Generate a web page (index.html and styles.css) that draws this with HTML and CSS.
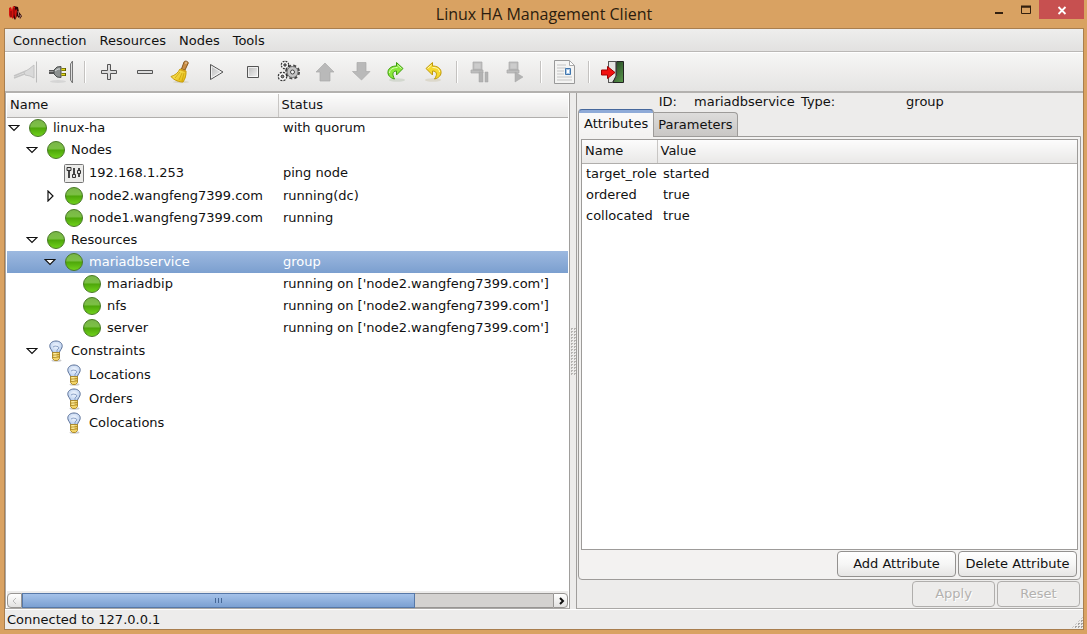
FILE: index.html
```
<!DOCTYPE html>
<html lang="en">
  <head>
    <meta charset="utf-8" />
    <title>Linux HA Management Client</title>
    <link rel="stylesheet" href="styles.css">
  </head>

  <body>
    <!-- shared icons -->
    <svg class="defs" width="0" height="0" aria-hidden="true">
      <defs>
        <linearGradient id="metal" x1="0" y1="0" x2="1" y2="1">
          <stop offset="0" stop-color="#b8b8b8" />
          <stop offset="1" stop-color="#f6f6f6" />
        </linearGradient>
        <linearGradient id="straw" x1="0" y1="0" x2="1" y2="1">
          <stop offset="0" stop-color="#fff27a" />
          <stop offset="1" stop-color="#e3b500" />
        </linearGradient>
        <linearGradient id="forest" x1="0" y1="0" x2="1" y2="1">
          <stop offset="0" stop-color="#16301a" />
          <stop offset="1" stop-color="#5c9a4d" />
        </linearGradient>
        <radialGradient id="glass" cx="0.5" cy="0.4" r="0.6">
          <stop offset="0" stop-color="#f4f8ff" />
          <stop offset="1" stop-color="#b4cbec" />
        </radialGradient>
      </defs>
      <symbol id="open" viewBox="0 0 12 12">
        <path d="M1 3.500h10L6 8.500z" fill="#fff" stroke="#111" stroke-width="1.200" />
      </symbol>
      <symbol id="closed" viewBox="0 0 12 12">
        <path d="M4 1v10l5-5z" fill="#fff" stroke="#111" stroke-width="1.200" />
      </symbol>
      <symbol id="bulb" viewBox="0 0 18 22">
        <ellipse cx="9.500" cy="20.500" rx="5" ry="1.200" fill="#ccc" />
        <path d="M9 1C5 1 2.500 3.500 2.800 6.500c.2 2.500 2.400 3.500 2.900 6.500h6.600c.5-3 2.700-4 2.900-6.500C15.500 3.500 13 1 9 1z" fill="url(#glass)" stroke="#5a7098" />
        <path d="M6 7l2-1 3 .5 1 1.500-2 2v2.500" fill="none" stroke="#7f97bf" stroke-width=".9" />
        <path d="M5.500 12.500h7v6l-2 2h-3l-2-2z" fill="#f3d568" stroke="#a98423" stroke-width=".9" />
        <path d="M5.500 15.200l7-.6M5.500 17.400l7-.6" stroke="#a98423" />
        <path d="M6.500 13.800h3M6.500 16.200h3" stroke="#fff5b8" />
      </symbol>
    </svg>

    <header class="titlebar">
      <svg class="logo" viewBox="0 0 14 16" width="14" height="16">
        <path d="M6 1l4 1 1 5 3 4-2 3-3-3-2 4-2-3z" fill="#2b0605" />
        <path d="M1 3l2-1 1 3 1-4 2 1v4l1-2 1 1-1 9-1-2-1-3-1 5-2-2-1 1-1-3z" fill="#d5120e" />
        <path d="M3 6v6M6 3v8" stroke="#7a0705" />
        <path d="M10 6l1 5M13 10l-2 4" stroke="#e9b9a8" stroke-width=".7" />
      </svg>
      <h1>Linux HA Management Client</h1>
      <div class="window-buttons">
        <button aria-label="Minimize"><svg viewBox="0 0 12 18" width="12" height="18"><path d="M2 12h8" stroke="#33200f" stroke-width="2" /></svg></button>
        <button aria-label="Maximize"><svg viewBox="0 0 12 18" width="12" height="18"><path d="M1.500 6h9v6.500h-9z" fill="none" stroke="#33200f" /><path d="M1 5.500h10" stroke="#33200f" stroke-width="2" /></svg></button>
        <button class="close" aria-label="Close"><svg viewBox="0 0 12 18" width="12" height="18"><path d="M2.500 6l7 7M9.500 6l-7 7" stroke="#fff" stroke-width="1.800" /></svg></button>
      </div>
    </header>

    <div class="window">
      <nav class="menubar">
        <button>Connection</button>
        <button>Resources</button>
        <button>Nodes</button>
        <button>Tools</button>
      </nav>

      <div class="toolbar">
        <button aria-label="Login" disabled>
          <svg viewBox="0 0 24 24">
            <path d="M1 16l12-5M1 18l13-5" stroke="#c3c3c3" stroke-width="1.500" fill="none" />
            <path d="M11 12l5-3 5-4v13l-4-2-5-1z" fill="#dadada" stroke="#c3c3c3" />
            <path d="M23.500 1.500v21" stroke="#bbb" />
          </svg>
        </button>
        <button aria-label="Logout">
          <svg viewBox="0 0 24 24">
            <ellipse cx="9" cy="21.500" rx="8" ry="1.500" fill="#d5d5d5" />
            <path d="M0 12h6" stroke="#555" stroke-width="4" />
            <path d="M0 11.500h6" stroke="#999" />
            <path d="M5 10l3-3 4-.5v11L8 17l-3-3z" fill="#8d9190" stroke="#4b4f4e" />
            <path d="M6 11l3-2h2" stroke="#d9dddc" fill="none" />
            <path d="M12.500 9.500H17M12.500 14.500H17" stroke="#5f5c00" stroke-width="3" />
            <path d="M12.500 9.500H16M12.500 14.500H16" stroke="#e6dc1c" stroke-width="1.400" />
            <path d="M23.500 1l-2 3v16l2 3z" fill="#ddd" stroke="#777" />
          </svg>
        </button>
        <span class="separator"></span>
        <button aria-label="Add">
          <svg viewBox="0 0 24 24"><path d="M10.500 4.500h3v6h6v3h-6v6h-3v-6h-6v-3h6z" fill="#ddd" stroke="#555" /></svg>
        </button>
        <button aria-label="Remove">
          <svg viewBox="0 0 24 24"><path d="M4.500 10.500h15v3h-15z" fill="#ddd" stroke="#555" /></svg>
        </button>
        <button aria-label="Clean up">
          <svg viewBox="0 0 24 24">
            <ellipse cx="12" cy="22" rx="8" ry="1.200" fill="#d8d5c9" />
            <path d="M12.500 9l2.500-7c.6-1.600 4.600-.8 4.200 1.200L16 10z" fill="#c98d45" stroke="#85571f" />
            <path d="M17 2.200v1.600" stroke="#fbe9cd" />
            <path d="M11 9l6 2c.3 4-.8 8-3 11-3 .2-9-1.500-12-5.500 4-1.200 7-3.500 9-7.500z" fill="url(#straw)" stroke="#c69b08" />
            <path d="M11 12l-5 6M13 13l-3 7M15 13l-2 8" stroke="#c69b08" stroke-width=".7" />
            <path d="M11 9.500l6 2" stroke="#d4a21a" stroke-width="1.500" />
          </svg>
        </button>
        <button aria-label="Start">
          <svg viewBox="0 0 24 24"><path d="M5.500 4.500v15l12.500-7.500z" fill="url(#metal)" stroke="#555" /><path d="M6.500 6.300v11.400l9.500-5.700z" fill="none" stroke="#fff" stroke-width=".7" /></svg>
        </button>
        <button aria-label="Stop">
          <svg viewBox="0 0 24 24"><path d="M6.500 6.500h11v11h-11z" fill="url(#metal)" stroke="#555" /><path d="M7.500 7.500h9v9h-9z" fill="none" stroke="#fff" stroke-width=".7" /></svg>
        </button>
        <button aria-label="Default">
          <svg viewBox="0 0 24 24">
            <circle cx="15.500" cy="12" r="6" fill="#bbb" stroke="#444" stroke-width="3" stroke-dasharray="2.700 2.010" />
            <circle cx="15.500" cy="12" r="5.500" fill="#c4c4c4" stroke="#777" />
            <circle cx="15.500" cy="12" r="2" fill="#f4f4f4" stroke="#444" />
            <circle cx="8" cy="5" r="3.300" fill="#fafafa" stroke="#333" stroke-width="2" stroke-dasharray="1.700 .9" />
            <circle cx="8" cy="5" r="3" fill="#fafafa" />
            <circle cx="8" cy="5" r="1.200" fill="#888" stroke="#333" />
            <circle cx="5.500" cy="16.500" r="3.800" fill="#fafafa" stroke="#333" stroke-width="2" stroke-dasharray="1.900 1.080" />
            <circle cx="5.500" cy="16.500" r="3.500" fill="#fafafa" />
            <circle cx="5.500" cy="16.500" r="1.400" fill="#888" stroke="#333" />
          </svg>
        </button>
        <button aria-label="Move up" disabled>
          <svg viewBox="0 0 24 24"><path d="M12 3l9 9h-4v9H7v-9H3z" fill="#b9b9b9" stroke="#aaa" stroke-width=".7" /></svg>
        </button>
        <button aria-label="Move down" disabled>
          <svg viewBox="0 0 24 24"><path d="M8 2.500h9v9h4L12.500 20 3.500 11.500H8z" fill="#b9b9b9" stroke="#aaa" stroke-width=".7" /></svg>
        </button>
        <button aria-label="Migrate">
          <svg viewBox="0 0 24 24">
            <ellipse cx="12" cy="20" rx="8" ry="1.700" fill="#d3d8cf" />
            <path d="M11.500 2.500l6.500 6-6.500 6.500v-4c-4 0-4.500 3.500-2 8C5 18 2.500 15 3 11.500c.5-3.500 4-5.500 8.500-5.500z" fill="#8ae83a" stroke="#3f9d10" />
            <path d="M12.500 5l4 3.500M4.500 13c0-3.500 3.500-5.500 8-5.500" stroke="#d7ffb8" fill="none" />
          </svg>
        </button>
        <button aria-label="Unmigrate">
          <svg viewBox="0 0 24 24">
            <ellipse cx="12" cy="20" rx="8" ry="1.700" fill="#dcd8cb" />
            <path d="M11.500 2.500L5 8.500l6.500 6.500v-4c4 0 5.500 3 2 8 4.500-1 7-4 6.500-7.500C19.500 8 16 6 11.500 6z" fill="#f6d92f" stroke="#c09a0b" />
            <path d="M10.500 5L6.500 8.500M18.500 12c0-3-3-4.500-7-4.500" stroke="#fff9bd" fill="none" />
          </svg>
        </button>
        <span class="separator"></span>
        <button aria-label="Standby" disabled>
          <svg viewBox="0 0 24 24">
            <path d="M4 2h9v8H4zM2 10h12v3H2z" fill="#bdbdbd" stroke="#aaa" stroke-width=".7" />
            <path d="M5.500 3.500h6v5h-6z" fill="#ccc" />
            <path d="M10 12h4v10h-4zM16 12h3v10h-3z" fill="#b3b3b3" stroke="#a5a5a5" stroke-width=".5" />
          </svg>
        </button>
        <button aria-label="Active" disabled>
          <svg viewBox="0 0 24 24">
            <path d="M4 2h9v8H4zM2 10h12v3H2z" fill="#bdbdbd" stroke="#aaa" stroke-width=".7" />
            <path d="M5.500 3.500h6v5h-6z" fill="#ccc" />
            <path d="M10 12l8 5-8 5z" fill="#b3b3b3" stroke="#a5a5a5" stroke-width=".5" />
          </svg>
        </button>
        <span class="separator"></span>
        <button aria-label="View transition">
          <svg viewBox="0 0 24 24">
            <path d="M1.500.5h15l5 5v18h-20z" fill="#f4f4f3" stroke="#999" />
            <path d="M16.500.5v5h5z" fill="#fff" stroke="#aaa" />
            <path d="M4 5h9M4 8h9M4 11h7M4 14h7M4 17h15M4 20h15" stroke="#c4c4c4" />
            <path d="M12.500 8.500h5v6h-5z" fill="#a9c8e8" stroke="#4176ad" />
            <path d="M14 10h2v3h-2z" fill="#fff" />
          </svg>
        </button>
        <span class="separator"></span>
        <button aria-label="Quit">
          <svg viewBox="0 0 24 24">
            <path d="M7.500 1.500h15v21h-15z" fill="url(#forest)" stroke="#222" />
            <path d="M7.500 1.500h8v15l-4 6h-4z" fill="#e6e6e4" stroke="#555" />
            <path d="M15 2v14l-3 6" stroke="#222" fill="none" />
            <path d="M.5 10h6V6.500l7.500 6-7.500 6V15h-6z" fill="#f21111" stroke="#a30000" />
          </svg>
        </button>
      </div>

      <main class="panes">
        <section class="left">
          <table class="tree">
            <thead>
              <tr><th>Name</th><th>Status</th></tr>
            </thead>
            <tbody>
              <tr>
                <td><div class="node"><svg class="arrow"><use href="#open" /></svg><i class="ball"></i>linux-ha</div></td>
                <td>with quorum</td>
              </tr>
              <tr>
                <td><div class="node level1"><svg class="arrow"><use href="#open" /></svg><i class="ball"></i>Nodes</div></td>
                <td></td>
              </tr>
              <tr class="tall">
                <td>
                  <div class="node level2"><span class="arrow"></span>
                    <svg class="ping" viewBox="0 0 20 19">
                      <rect x=".5" y=".5" width="19" height="18" rx="1" fill="#ececea" stroke="#777" />
                      <path d="M5 5v9M10 4v9M15 4v9" stroke="#444" stroke-width="2" />
                      <path d="M3 3.500h4v3H3zM8.500 10.500h3v3h-3zM13.500 6.500h3v3h-3z" fill="#ddd" stroke="#333" />
                    </svg>192.168.1.253</div>
                </td>
                <td>ping node</td>
              </tr>
              <tr>
                <td><div class="node level2"><svg class="arrow"><use href="#closed" /></svg><i class="ball"></i>node2.wangfeng7399.com</div></td>
                <td>running(dc)</td>
              </tr>
              <tr>
                <td><div class="node level2"><span class="arrow"></span><i class="ball"></i>node1.wangfeng7399.com</div></td>
                <td>running</td>
              </tr>
              <tr>
                <td><div class="node level1"><svg class="arrow"><use href="#open" /></svg><i class="ball"></i>Resources</div></td>
                <td></td>
              </tr>
              <tr class="selected">
                <td><div class="node level2"><svg class="arrow"><use href="#open" /></svg><i class="ball"></i>mariadbservice</div></td>
                <td>group</td>
              </tr>
              <tr>
                <td><div class="node level3"><span class="arrow"></span><i class="ball"></i>mariadbip</div></td>
                <td>running on ['node2.wangfeng7399.com']</td>
              </tr>
              <tr>
                <td><div class="node level3"><span class="arrow"></span><i class="ball"></i>nfs</div></td>
                <td>running on ['node2.wangfeng7399.com']</td>
              </tr>
              <tr>
                <td><div class="node level3"><span class="arrow"></span><i class="ball"></i>server</div></td>
                <td>running on ['node2.wangfeng7399.com']</td>
              </tr>
              <tr class="tall">
                <td><div class="node level1"><svg class="arrow"><use href="#open" /></svg><svg class="bulb"><use href="#bulb" /></svg>Constraints</div></td>
                <td></td>
              </tr>
              <tr class="tall">
                <td><div class="node level2"><span class="arrow"></span><svg class="bulb"><use href="#bulb" /></svg>Locations</div></td>
                <td></td>
              </tr>
              <tr class="tall">
                <td><div class="node level2"><span class="arrow"></span><svg class="bulb"><use href="#bulb" /></svg>Orders</div></td>
                <td></td>
              </tr>
              <tr class="tall">
                <td><div class="node level2"><span class="arrow"></span><svg class="bulb"><use href="#bulb" /></svg>Colocations</div></td>
                <td></td>
              </tr>
            </tbody>
          </table>
          <div class="scrollbar">
            <button class="scroll-left" aria-label="Scroll left" disabled><svg viewBox="0 0 8 8"><path d="M5 1L2 4l3 3" /></svg></button>
            <div class="track"><div class="thumb"><i></i><i></i><i></i></div></div>
            <button class="scroll-right" aria-label="Scroll right"><svg viewBox="0 0 8 8"><path d="M3 1l3 3-3 3" /></svg></button>
          </div>
        </section>

        <div class="splitter"><span class="grip"></span></div>

        <section class="right">
          <div class="info">
            <span>ID:</span>
            <span>mariadbservice</span>
            <span>Type:</span>
            <span>group</span>
          </div>
          <div class="tabs">
            <button class="tab active">Attributes</button>
            <button class="tab">Parameters</button>
          </div>
          <div class="page">
            <div class="list">
              <table class="attributes">
                <thead>
                  <tr><th>Name</th><th>Value</th></tr>
                </thead>
                <tbody>
                  <tr><td>target_role</td><td>started</td></tr>
                  <tr><td>ordered</td><td>true</td></tr>
                  <tr><td>collocated</td><td>true</td></tr>
                </tbody>
              </table>
            </div>
            <div class="buttons">
              <button class="wide">Add Attribute</button>
              <button class="wide">Delete Attribute</button>
            </div>
          </div>
          <div class="buttons bottom">
            <button disabled>Apply</button>
            <button disabled>Reset</button>
          </div>
        </section>
      </main>

      <footer class="statusbar">
        <span>Connected to 127.0.0.1</span>
        <span class="resize"></span>
      </footer>
    </div>
  </body>
</html>
```
FILE: styles.css
```
* {
  box-sizing: border-box;
}
body {
  margin: 0;
  height: 100vh;
  display: flex;
  flex-direction: column;
  padding: 0 3px 4px 4px;
  background: #d9a262;
  font-family: "DejaVu Sans", Verdana, sans-serif;
  font-size: 13px;
  line-height: 16px;
  color: #111;
}
button {
  font: inherit;
  color: inherit;
  border: none;
  background: none;
  padding: 0;
}
table {
  border-collapse: collapse;
  table-layout: fixed;
  width: 100%;
}
th {
  font-weight: normal;
  text-align: left;
}
.defs {
  position: absolute;
}

/* window frame */
.titlebar {
  display: grid;
  grid-template-columns: 1fr auto 1fr;
  height: 28px;
}
.logo {
  margin: 5px 4px;
}
.titlebar h1 {
  margin: 0;
  font-family: "Open Sans", sans-serif;
  font-size: 16px;
  font-weight: normal;
  line-height: 28px;
  color: #2b1c0e;
}
.window-buttons {
  display: flex;
  justify-content: flex-end;
}
.window-buttons button {
  width: 27px;
  height: 19px;
}
.window-buttons svg {
  display: block;
  margin: 0 auto;
}
.window-buttons .close {
  width: 45px;
  background: #c75050;
}
.window {
  flex: 1;
  min-height: 0;
  display: flex;
  flex-direction: column;
  border: 1px solid #a97e4e;
  background: #edeceb;
}

/* menu and toolbar */
.menubar {
  display: flex;
  gap: 13px;
  height: 23px;
  padding: 1px 8px 0;
  background: linear-gradient(#eeeeed, #e2e1e0);
  border-bottom: 1px solid #bab8b6;
}
.toolbar {
  display: flex;
  align-items: center;
  height: 41px;
  padding-left: 2px;
  background: linear-gradient(#f6f6f5, #e5e4e3);
  border-top: 1px solid #fff;
  border-bottom: 2px solid #b3b1af;
}
.toolbar button {
  width: 36px;
  height: 36px;
}
.toolbar svg {
  display: block;
  width: 24px;
  height: 24px;
  margin: 0 auto;
  overflow: visible;
}
.separator {
  width: 2px;
  height: 22px;
  margin: 0 5px;
  background: #c4c2c0;
  border-right: 1px solid #fff;
}

/* panes */
.panes {
  flex: 1;
  min-height: 0;
  display: grid;
  grid-template-columns: minmax(0, 564fr) 8px minmax(0, 506fr);
}
.left {
  display: flex;
  flex-direction: column;
  padding: 1px 1px 0;
  background: #fff;
  border-left: 1px solid #aaa8a6;
  border-bottom: 1px solid #aaa8a6;
}
.tree th,
.attributes th {
  height: 23px;
  padding: 0 3px;
  background: linear-gradient(#fcfcfc, #e9e8e7);
  border-bottom: 1px solid #b0aeac;
}
.tree th:first-child {
  width: 271px;
}
.tree th + th,
.attributes th + th {
  border-left: 1px solid #c8c6c4;
}
.tree td {
  height: 22px;
  padding: 0 5px;
  white-space: nowrap;
}
.tree td:first-child {
  padding: 0 0 0 1px;
}
.tree .tall td {
  height: 24px;
}
.tree .selected {
  background: linear-gradient(#9db9e0, #7b9fcf);
  color: #fff;
}
.node {
  display: flex;
  align-items: center;
}
.level1 {
  padding-left: 18px;
}
.level2 {
  padding-left: 36px;
}
.level3 {
  padding-left: 54px;
}
.arrow {
  flex: none;
  width: 12px;
  height: 12px;
  margin-right: 9px;
}
.ball {
  flex: none;
  width: 18px;
  height: 18px;
  margin-right: 6px;
  border: 1px solid #4a7a28;
  border-radius: 50%;
  background: linear-gradient(#79b548, #7cc046 40%, #4fa80a 52%, #6fd01c);
}
.bulb {
  flex: none;
  width: 18px;
  height: 22px;
  margin-right: 6px;
}
.ping {
  flex: none;
  width: 20px;
  height: 19px;
  margin-right: 5px;
  margin-left: -1px;
}
.scrollbar {
  display: flex;
  height: 17px;
  margin-top: auto;
  padding-top: 2px;
  background: #edeceb;
}
.scrollbar button {
  width: 15px;
  background: linear-gradient(#fff, #e3e2e1);
  border: 1px solid #979593;
}
.scrollbar svg {
  display: block;
  width: 8px;
  height: 8px;
  margin: 0 auto;
  fill: none;
  stroke: #111;
  stroke-width: 2px;
}
.scrollbar button:disabled svg {
  stroke: #bbb;
  stroke-width: 1px;
}
.scroll-left {
  border-radius: 4px 0 0 4px;
}
.scroll-right {
  border-radius: 0 4px 4px 0;
}
.track {
  flex: 1;
  background: #d4d2d0;
  border: 1px solid #979593;
  border-width: 1px 0;
}
.thumb {
  display: flex;
  justify-content: center;
  align-items: center;
  gap: 2px;
  width: 74%;
  height: 15px;
  margin-top: -1px;
  background: linear-gradient(#a5c2e9, #7ba0d2);
  border: 1px solid #5678a8;
}
.thumb i {
  width: 1px;
  height: 5px;
  background: #456796;
}
.splitter {
  display: flex;
  align-items: center;
  justify-content: center;
  background: #edeceb;
  border-left: 1px solid #a09e9c;
  border-right: 1px solid #a09e9c;
}
.grip {
  width: 5px;
  height: 48px;
  background: conic-gradient(#b5b3b1 25%, transparent 0) -1px 1px / 3px 3px;
}
.right {
  display: flex;
  flex-direction: column;
  padding: 1px 2px 0 1px;
  border-bottom: 1px solid #aaa8a6;
}
.info {
  display: grid;
  grid-template-columns: 99fr 124fr 42fr 238fr;
  height: 16px;
}
.info span:first-child {
  text-align: right;
}
.info span:nth-child(2) {
  padding-left: 17px;
}
.info span:nth-child(4) {
  padding-right: 74px;
  text-align: center;
}
.tabs {
  display: flex;
  align-items: flex-end;
  height: 26px;
}
.tab {
  height: 24px;
  padding: 0 4px;
  background: linear-gradient(#dddcdb, #c9c7c5);
  border: 1px solid #9d9b99;
  border-left: none;
  border-bottom: none;
  border-radius: 0 4px 0 0;
}
.tab.active {
  height: 28px;
  margin-bottom: -1px;
  padding: 0 5px;
  background: linear-gradient(#8fabd8 3px, #fafafa 3px, #f3f2f1);
  border: 1px solid #9d9b99;
  border-top-color: #46689c;
  border-bottom: none;
  border-radius: 4px 4px 0 0;
  z-index: 1;
}
.page {
  flex: 1;
  min-height: 0;
  display: flex;
  flex-direction: column;
  padding: 2px 2px 2px 2px;
  background: #f3f2f1;
  border: 1px solid #9d9b99;
  border-radius: 0 0 4px 4px;
}
.list {
  flex: 1;
  background: #fff;
  border: 1px solid #9d9b99;
}
.attributes th:first-child {
  width: 75px;
}
.attributes td {
  height: 21px;
  padding: 0 4px;
}
.attributes td + td {
  padding-left: 6px;
}
.buttons {
  display: flex;
  justify-content: flex-end;
  gap: 2px;
  padding: 1px 1px 0 0;
}
.buttons button {
  width: 83px;
  height: 26px;
  background: linear-gradient(#fff, #f6f6f5 50%, #e6e5e4);
  border: 1px solid #93918f;
  border-radius: 4px;
}
.buttons .wide {
  width: 119px;
}
.buttons button:disabled {
  background: #edeceb;
  border-color: #b0aeac;
  color: #b3b1af;
  text-shadow: 1px 1px #fff;
}
.bottom {
  padding-bottom: 1px;
}

.statusbar {
  display: flex;
  justify-content: space-between;
  align-items: flex-end;
  height: 20px;
  padding-left: 2px;
  border-top: 1px solid #fff;
}
.statusbar span:first-child {
  align-self: center;
}
.resize {
  width: 12px;
  height: 12px;
  background: conic-gradient(#a5a3a1 25%, transparent 0) 0 0 / 3px 3px;
  clip-path: polygon(100% 0, 100% 100%, 0 100%);
}
```
